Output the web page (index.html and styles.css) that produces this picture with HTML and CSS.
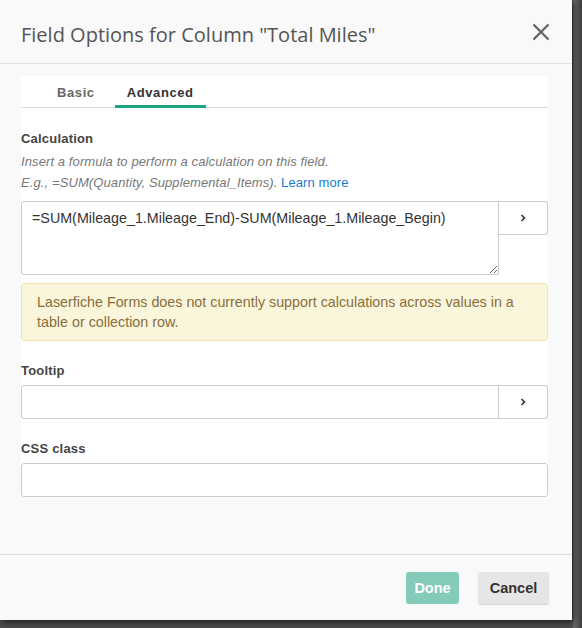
FILE: index.html
```html
<!DOCTYPE html>
<html lang="en">
<head>
    <meta charset="UTF-8">
    <meta name="viewport" content="width=device-width, initial-scale=1.0">
    <title>Field Options</title>
    <link rel="stylesheet" href="styles.css">
</head>
<body>
    <div class="backdrop">
        <div class="modal">
            <!-- Header -->
            <div class="modal-header">
                <h1>Field Options for Column "Total Miles"</h1>
                <button class="close-btn" aria-label="Close">
                    <svg width="18" height="18" viewBox="0 0 18 18">
                        <path d="M1.5 1.5 L16.5 16.5 M16.5 1.5 L1.5 16.5" stroke="#666" stroke-width="2.4" fill="none"/>
                    </svg>
                </button>
            </div>

            <div class="modal-body">
                <div class="panel">
                    <div class="tabs">
                        <span class="tab">Basic</span>
                        <span class="tab active">Advanced</span>
                    </div>
                </div>

                <div class="panel-content">
                    <div class="group">
                        <label class="label">Calculation</label>
                        <p class="help">Insert a formula to perform a calculation on this field.<br>
                            E.g., =SUM(Quantity, Supplemental_Items). <a href="#">Learn more</a></p>
                        <div class="input-row">
                            <textarea class="formula">=SUM(Mileage_1.Mileage_End)-SUM(Mileage_1.Mileage_Begin)</textarea>
                            <button class="side-btn">
                                <svg width="6" height="8" viewBox="0 0 6 8"><path d="M1.5 1 L4.5 4 L1.5 7" stroke="#333" stroke-width="1.6" fill="none"/></svg>
                            </button>
                        </div>
                        <div class="alert">Laserfiche Forms does not currently support calculations across values in a table or collection row.</div>
                    </div>

                    <div class="group">
                        <label class="label field">Tooltip</label>
                        <div class="input-row">
                            <input type="text" class="text-input">
                            <button class="side-btn">
                                <svg width="6" height="8" viewBox="0 0 6 8"><path d="M1.5 1 L4.5 4 L1.5 7" stroke="#333" stroke-width="1.6" fill="none"/></svg>
                            </button>
                        </div>
                    </div>

                    <div class="group">
                        <label class="label field">CSS class</label>
                        <input type="text" class="text-input full">
                    </div>
                </div>
            </div>

            <!-- Footer -->
            <div class="modal-footer">
                <button class="btn done">Done</button>
                <button class="btn cancel">Cancel</button>
            </div>
        </div>
    </div>
</body>
</html>
```

FILE: styles.css
```css
html, body {
    margin: 0;
    padding: 0;
}

body {
    font-family: "Liberation Sans", Arial, sans-serif;
    background: #3d3d3d;
    width: 582px;
    height: 628px;
    overflow: hidden;
}

.backdrop {
    height: 628px;
    background: linear-gradient(to right, #4a4a4a 0, #4a4a4a 572px, #6a6a6a 574px, #3c3c3c 582px);
}

.modal {
    width: 572px;
    height: 620px;
    background: #f9f9f9;
    display: flex;
    flex-direction: column;
    box-shadow: 2px 2px 6px rgba(0, 0, 0, 0.6);
}

.modal-header {
    height: 64px;
    border-bottom: 1px solid #e3e3e3;
    display: flex;
    align-items: flex-start;
    justify-content: space-between;
    padding: 22px 22px 0 21px;
    box-sizing: border-box;
}

.modal-header h1 {
    margin: 0;
    font-family: "Open Sans", sans-serif;
    font-size: 20px;
    line-height: 26px;
    font-weight: 400;
    color: #555;
}

.close-btn {
    border: none;
    background: none;
    padding: 0;
    margin-top: 1px;
    cursor: pointer;
    display: flex;
}

.modal-body {
    flex: 1;
    padding: 12px 24px 0 21px;
}

.panel {
    background: #fff;
}

.tabs {
    display: flex;
    height: 31px;
    border-bottom: 1px solid #ddd;
    padding-left: 36px;
}

.tab {
    font-size: 13px;
    font-weight: bold;
    color: #666;
    padding: 9px 0 0;
    margin-right: 20px;
    letter-spacing: 0.6px;
}

.tab.active {
    color: #333;
    border-bottom: 3px solid #1ba384;
    margin-bottom: -1px;
    padding: 9px 12px 0 12px;
}

.panel-content {
    background: linear-gradient(#fff, #fff) no-repeat 0 0 / 100% 358px;
    padding-top: 23px;
}

.group {
    margin-bottom: 22px;
}

.label {
    display: block;
    font-size: 13px;
    font-weight: bold;
    color: #444;
    margin-bottom: 5px;
    letter-spacing: 0.2px;
}

.label.field {
    margin-bottom: 7px;
}

.help {
    margin: 0 0 8px;
    font-size: 13px;
    font-style: italic;
    color: #777;
    line-height: 21px;
    letter-spacing: 0.1px;
}

.help a {
    color: #1a7bd0;
    font-style: normal;
    text-decoration: none;
}

.input-row {
    display: flex;
    align-items: flex-start;
}

.formula {
    flex: 1;
    height: 74px;
    box-sizing: border-box;
    border: 1px solid #ccc;
    border-radius: 3px 0 0 3px;
    padding: 8px 10px;
    font-family: "Liberation Sans", Arial, sans-serif;
    font-size: 14.3px;
    color: #333;
    resize: vertical;
    margin: 0;
}

.side-btn {
    width: 49px;
    height: 34px;
    box-sizing: border-box;
    border: 1px solid #ccc;
    border-left: none;
    border-radius: 0 3px 3px 0;
    background: #fff;
    padding: 0;
    display: flex;
    align-items: center;
    justify-content: center;
}

.text-input {
    flex: 1;
    height: 34px;
    box-sizing: border-box;
    border: 1px solid #ccc;
    border-radius: 3px 0 0 3px;
    background: #fff;
    margin: 0;
    padding: 6px 10px;
}

.text-input.full {
    display: block;
    width: 100%;
    border-radius: 3px;
}

.alert {
    margin-top: 8px;
    background: #faf6dc;
    border: 1px solid #f3e4ae;
    border-radius: 3px;
    color: #8a6d3b;
    font-size: 14.3px;
    line-height: 20px;
    padding: 8px 15px 8px;
}

.modal-footer {
    height: 66px;
    border-top: 1px solid #ddd;
    display: flex;
    justify-content: flex-end;
    align-items: flex-start;
    gap: 19px;
    padding: 17px 23px 0 0;
    box-sizing: border-box;
}

.btn {
    height: 32px;
    border: none;
    border-radius: 3px;
    font-family: "Liberation Sans", Arial, sans-serif;
    font-size: 14.5px;
    font-weight: bold;
    padding: 0;
    cursor: pointer;
}

.done {
    background: #84cbba;
    color: #fff;
    width: 53px;
}

.cancel {
    background: #e6e6e6;
    color: #333;
    width: 71px;
    box-shadow: 0 1px 1px rgba(0, 0, 0, 0.15);
}
```
